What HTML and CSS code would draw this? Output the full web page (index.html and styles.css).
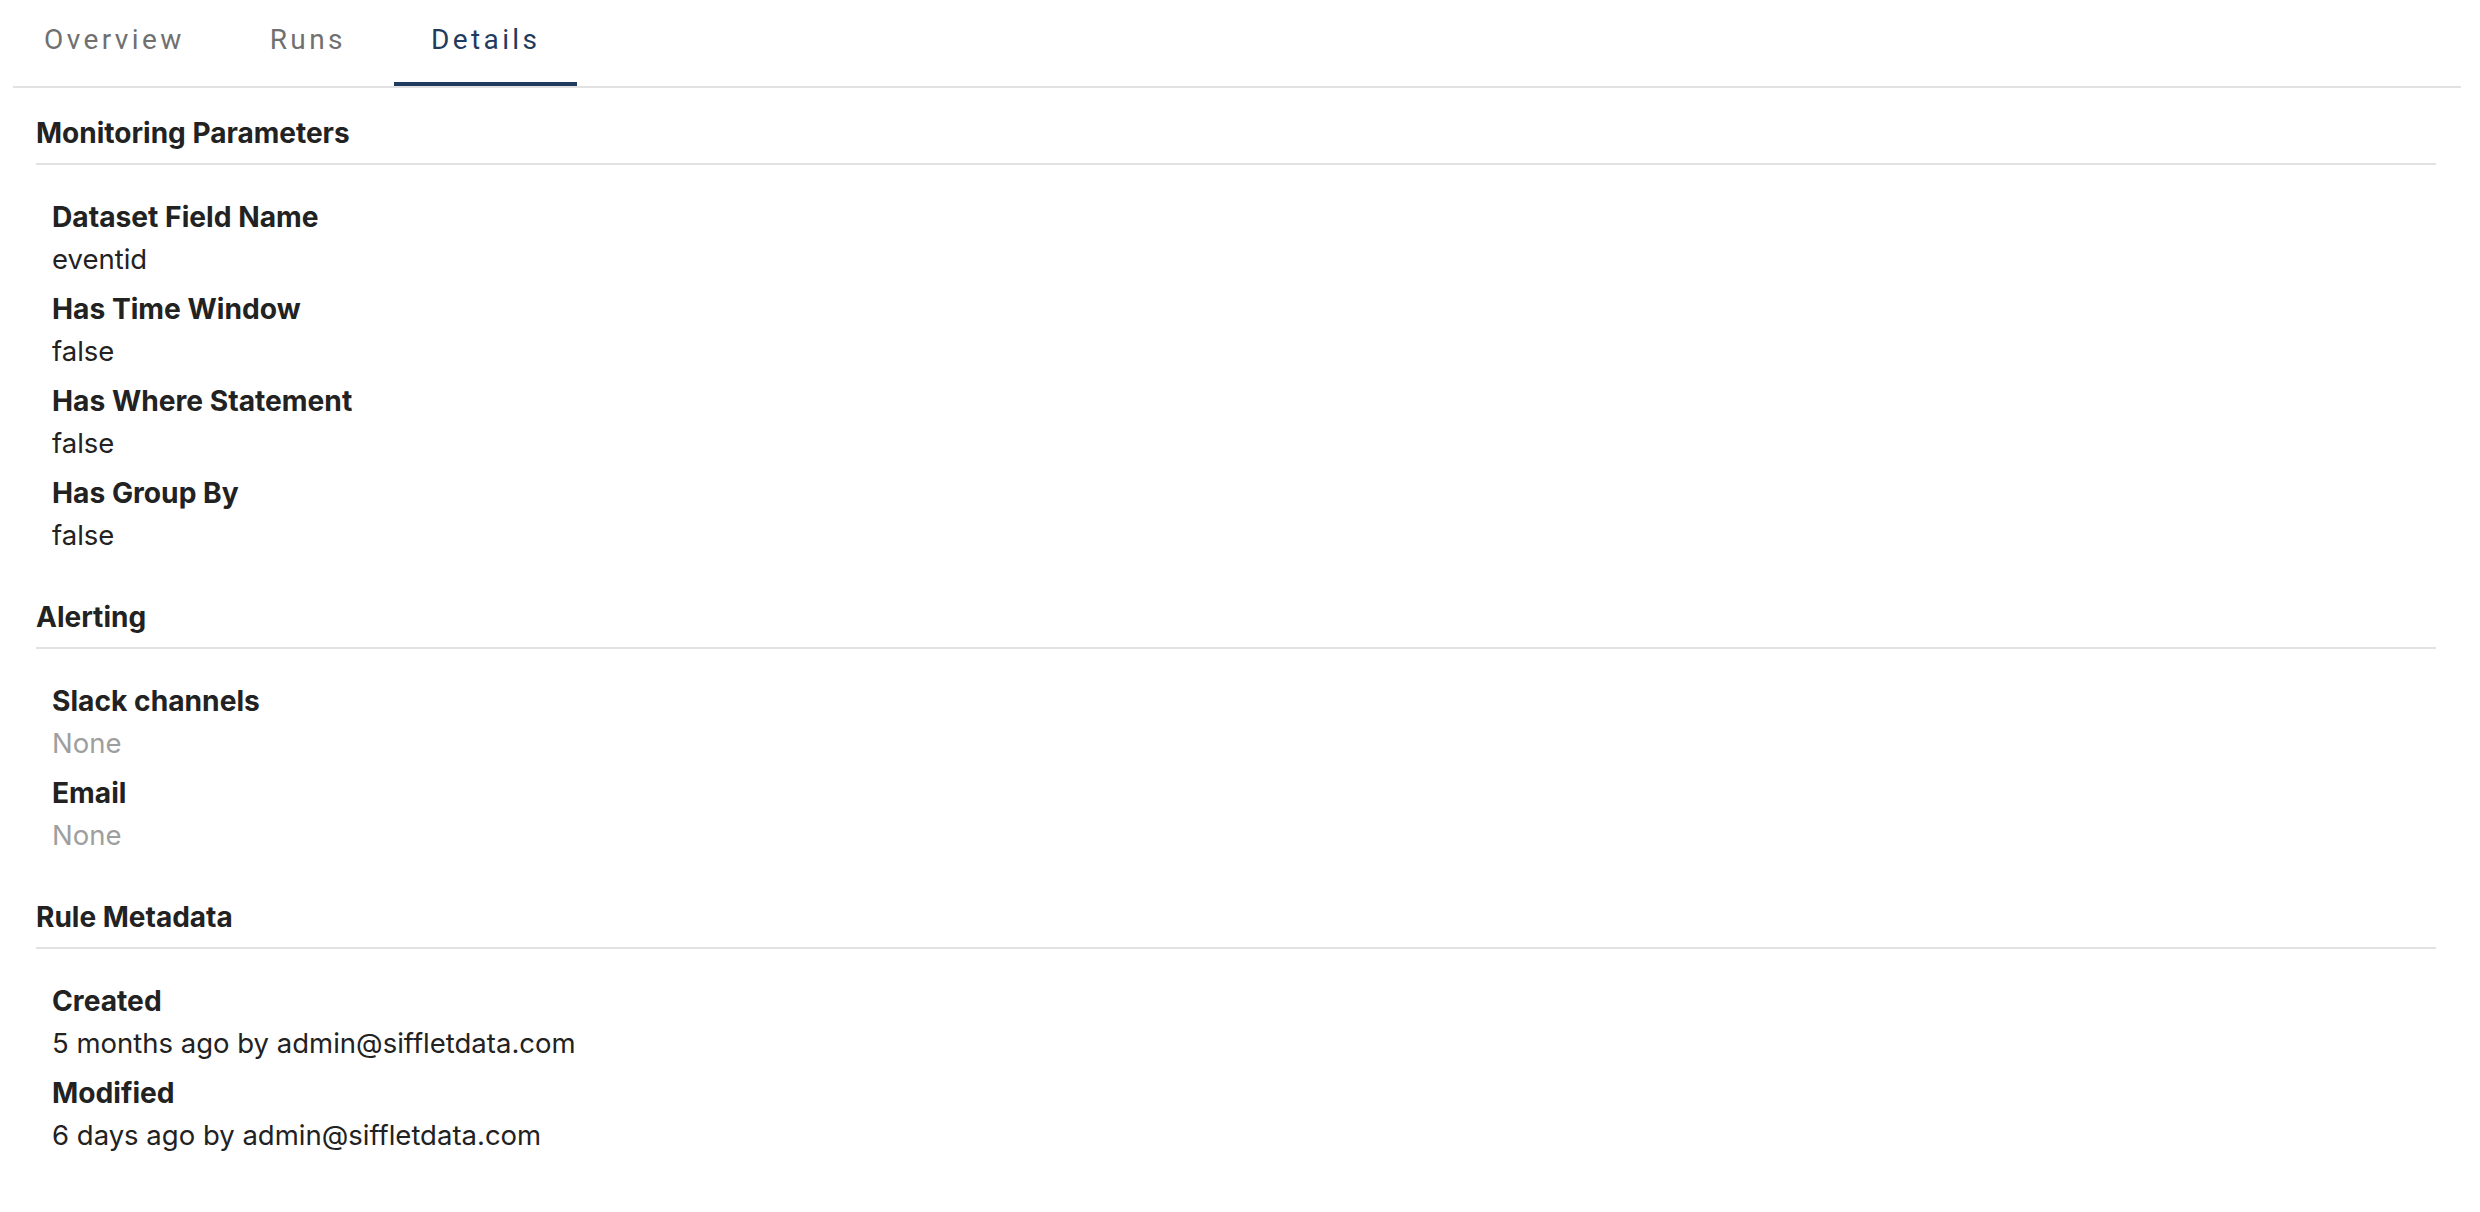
FILE: index.html
```html
<!DOCTYPE html>
<html lang="en">
<head>
  <meta charset="UTF-8">
  <title>Rule Details</title>
  <link rel="stylesheet" href="styles.css">
</head>
<body>

  <!-- Tabs -->
  <nav class="tabs">
    <a class="tab tab-first">Overview</a>
    <a class="tab">Runs</a>
    <a class="tab active">Details</a>
  </nav>

  <div class="content">

    <section class="section">
      <h3 class="section-title">Monitoring Parameters</h3>
      <dl class="fields">
        <div class="field">
          <dt>Dataset Field Name</dt>
          <dd>eventid</dd>
        </div>
        <div class="field">
          <dt>Has Time Window</dt>
          <dd>false</dd>
        </div>
        <div class="field">
          <dt>Has Where Statement</dt>
          <dd>false</dd>
        </div>
        <div class="field">
          <dt>Has Group By</dt>
          <dd>false</dd>
        </div>
      </dl>
    </section>

    <section class="section">
      <h3 class="section-title">Alerting</h3>
      <dl class="fields">
        <div class="field">
          <dt>Slack channels</dt>
          <dd class="empty">None</dd>
        </div>
        <div class="field">
          <dt>Email</dt>
          <dd class="empty">None</dd>
        </div>
      </dl>
    </section>

    <section class="section">
      <h3 class="section-title">Rule Metadata</h3>
      <dl class="fields">
        <div class="field">
          <dt>Created</dt>
          <dd>5 months ago by admin@siffletdata.com</dd>
        </div>
        <div class="field">
          <dt>Modified</dt>
          <dd>6 days ago by admin@siffletdata.com</dd>
        </div>
      </dl>
    </section>

  </div>

</body>
</html>
```

FILE: styles.css
```css
body {
  margin: 0;
  font-family: Inter, 'Noto Sans', sans-serif;
  background-color: #fff;
  color: #222;
}

.tabs {
  display: flex;
  gap: 11px;
  margin: 0 19px 0 13px;
  border-bottom: 2px solid #e2e2e2;
}

.tab {
  height: 86px;
  line-height: 80px;
  padding: 0 37px;
  font-family: Roboto, Inter, sans-serif;
  font-size: 28px;
  letter-spacing: 3.4px;
  color: #707070;
  cursor: pointer;
}

.tab-first {
  padding-left: 31px;
}

.tab.active {
  color: #1f3b5e;
  box-shadow: inset 0 -4px 0 #1f3b5e;
}

.content {
  padding: 0 44px 40px 36px;
}

.section {
  margin-top: 25px;
}

.section + .section {
  margin-top: 41px;
}

.section-title {
  margin: 0;
  padding-bottom: 10px;
  border-bottom: 2px solid #e2e2e2;
  font-size: 28px;
  line-height: 40px;
  font-weight: 700;
  color: #222;
}

.fields {
  margin: 0;
  padding: 31px 0 0 16px;
}

.field + .field {
  margin-top: 8px;
}

dt {
  font-size: 28.2px;
  line-height: 42px;
  font-weight: 700;
}

dd {
  margin: 0;
  font-size: 27.5px;
  line-height: 42px;
}

dd.empty {
  color: #9e9e9e;
}
```
